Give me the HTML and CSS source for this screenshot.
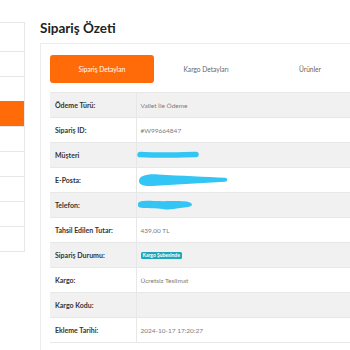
FILE: index.html
```html
<!DOCTYPE html>
<html lang="tr">
<head>
  <meta charset="UTF-8" />
  <meta name="viewport" content="width=device-width, initial-scale=1.0" />
  <title>Sipariş Özeti</title>
  <link rel="stylesheet" href="styles.css">
</head>
<body>
  <div class="page">
    <!-- account menu ------------------------------------------------->
    <ul class="side-menu">
      <li class="first"></li>
      <li></li>
      <li></li>
      <li class="active"></li>
      <li></li>
      <li></li>
      <li></li>
      <li></li>
      <li></li>
    </ul>

    <!-- order summary ------------------------------------------------>
    <main class="content">
      <h1 class="title">Sipariş Özeti</h1>

      <div class="card">
        <div class="tabs">
          <button class="tab active">Sipariş Detayları</button>
          <button class="tab">Kargo Detayları</button>
          <button class="tab">Ürünler</button>
        </div>

        <table class="details">
          <tr><th>Ödeme Türü:</th><td>Vallet İle Ödeme</td></tr>
          <tr><th>Sipariş ID:</th><td>#W99664847</td></tr>
          <tr>
            <th>Müşteri</th>
            <td>
              <svg class="redact" width="64" height="10" viewBox="0 0 64 10">
                <path d="M4 4.6 C14 5.4 24 4.6 34 5 C44 5.2 52 4.2 60 4.4" fill="none" stroke="#33c6f4" stroke-width="5.5" stroke-linecap="round"/>
              </svg>
            </td>
          </tr>
          <tr>
            <th>E-Posta:</th>
            <td>
              <svg class="redact" width="94" height="16" viewBox="0 0 94 16">
                <path d="M3 9 C3 4 10 1.8 22 2.4 C45 3.6 70 4.8 89 5.8 C92 6.2 92 9.4 89 9.8 C66 10.8 42 12.6 20 13.8 C8 14.6 3 13.2 3 9 Z" fill="#33c6f4"/>
              </svg>
            </td>
          </tr>
          <tr>
            <th>Telefon:</th>
            <td>
              <svg class="redact" width="60" height="14" viewBox="0 0 60 14">
                <path d="M2 6 C2 3 8 2.6 18 3 C30 3.4 40 2.8 46 3.2 C52 3.4 56 4.4 56 6.6 C56 9 50 9.6 44 10 C38 10.6 34 12 28 11.2 C20 10 10 10.6 5 9.8 C2 9.4 2 8 2 6 Z" fill="#33c6f4"/>
              </svg>
            </td>
          </tr>
          <tr><th>Tahsil Edilen Tutar:</th><td>439,00 TL</td></tr>
          <tr><th>Sipariş Durumu:</th><td><span class="badge">Kargo Şubesinde</span></td></tr>
          <tr><th>Kargo:</th><td>Ücretsiz Teslimat</td></tr>
          <tr><th>Kargo Kodu:</th><td></td></tr>
          <tr><th>Ekleme Tarihi:</th><td>2024-10-17 17:20:27</td></tr>
        </table>
      </div>
    </main>
  </div>
</body>
</html>
```

FILE: styles.css
```css
:root {
  --orange: #ff6b08;
  --line: #e7e7e7;
  --row-grey: #f1f1f1;
  --teal: #1fa6b8;
}
* { margin: 0; padding: 0; box-sizing: border-box; }

body {
  background: #fff;
  font-family: 'Lato', 'Noto Sans', sans-serif;
  color: #333;
}
.page {
  display: flex;
  align-items: flex-start;
  width: 100vw;
  height: 100vh;
  overflow: hidden;
}

/* side menu */
.side-menu {
  list-style: none;
  width: 25px;
  margin-top: 22px;
  border: 1px solid var(--line);
  border-left: none;
  flex-shrink: 0;
}
.side-menu li {
  height: 25px;
  border-top: 1px solid var(--line);
}
.side-menu li.first { height: 28px; border-top: none; }
.side-menu li.active {
  background: var(--orange);
  border-top-color: var(--orange);
}

/* content */
.content {
  flex-shrink: 0;
  width: 420px;
  margin-left: 15px;
}
.title {
  font-size: 13.5px;
  font-weight: 700;
  color: #222;
  line-height: 16px;
  margin-top: 20px;
  margin-bottom: 7px;
}
.card {
  border: 1px solid #ececec;
  padding: 11px 9px 20px;
}

.tabs {
  display: flex;
  margin-bottom: 9px;
}
.tab {
  width: 104px;
  height: 28px;
  border: none;
  border-radius: 3px;
  background: transparent;
  font: inherit;
  font-size: 6.6px;
  color: #666;
}
.tab.active {
  background: var(--orange);
  color: #fff;
}

.details {
  width: 100%;
  border-collapse: collapse;
  border-top: 1px solid var(--line);
}
.details tr { height: 25px; border-bottom: 1px solid var(--line); }
.details tr:nth-child(odd) { background: var(--row-grey); }
.details th {
  width: 86px;
  text-align: left;
  font-size: 7px;
  font-weight: 700;
  color: #333;
  padding: 0 5px;
  border-right: 1px solid var(--line);
}
.details td {
  font-size: 6.5px;
  color: #7c7c7c;
  padding: 0 4px;
}
.redact {
  display: block;
  margin-left: -5px;
}

.badge {
  display: inline-block;
  background: var(--teal);
  color: #fff;
  font-size: 5px;
  font-weight: 700;
  line-height: 7px;
  padding: 0 2px;
  border-radius: 1.5px;
}
```
